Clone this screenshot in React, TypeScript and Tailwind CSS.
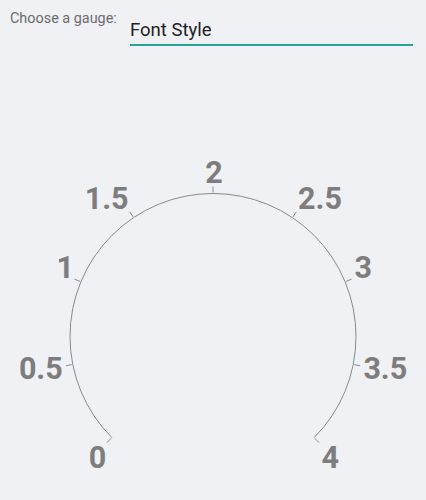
import React from 'react';

const CX = 213;
const CY = 336.5;
const R = 143;

// ink centres of the scale labels, read off the reference
const labels: { text: string; x: number; y: number }[] = [
  { text: '0', x: 97.5, y: 457.5 },
  { text: '0.5', x: 40.8, y: 368 },
  { text: '1', x: 66.8, y: 267.5 },
  { text: '1.5', x: 106.7, y: 198.3 },
  { text: '2', x: 214, y: 172.5 },
  { text: '2.5', x: 320, y: 198.3 },
  { text: '3', x: 363.3, y: 267 },
  { text: '3.5', x: 385.3, y: 368 },
  { text: '4', x: 330.3, y: 457.5 },
];

function polar(deg: number, r: number) {
  const a = (deg * Math.PI) / 180;
  return { x: CX + r * Math.sin(a), y: CY - r * Math.cos(a) };
}

function Gauge() {
  const start = polar(-135, R);
  const end = polar(135, R);
  const arc = `M ${start.x} ${start.y} A ${R} ${R} 0 1 1 ${end.x} ${end.y}`;

  return (
    <svg width="426" height="453" viewBox="0 47 426 453" className="block">
      <path d={arc} fill="none" stroke="#8a8a8a" strokeWidth="1" />
      {labels.map((l, i) => {
        const deg = -135 + i * 33.75;
        const a = polar(deg, R + 1);
        const b = polar(deg, R + 7);
        return <line key={'t' + i} x1={a.x} y1={a.y} x2={b.x} y2={b.y} stroke="#8a8a8a" strokeWidth="1" />;
      })}
      {labels.map((l) => (
        <text
          key={l.text}
          x={l.text === '1' ? l.x - 1.5 : l.x}
          y={l.y + 10.8}
          textAnchor="middle"
          fill="#7d7d7d"
          fontSize="30.5"
          fontWeight="700"
          fontFamily="Roboto, sans-serif"
        >
          {l.text}
        </text>
      ))}
    </svg>
  );
}

export default function App() {
  return (
    <div className="w-[426px] h-[500px] bg-[#f0f1f5] overflow-hidden font-['Roboto',sans-serif]">
      <div className="flex items-start pl-[10px] h-[47px]">
        <label className="w-[120px] mt-[8.5px] text-[14.4px] leading-5 text-[#6b6b6b]">Choose a gauge:</label>
        <div className="w-[283px] mt-[18.3px] pb-[2px] border-b-2 border-[#26a69a] text-[18.5px] leading-6 text-[#212121]">
          Font Style
        </div>
      </div>
      <Gauge />
    </div>
  );
}
